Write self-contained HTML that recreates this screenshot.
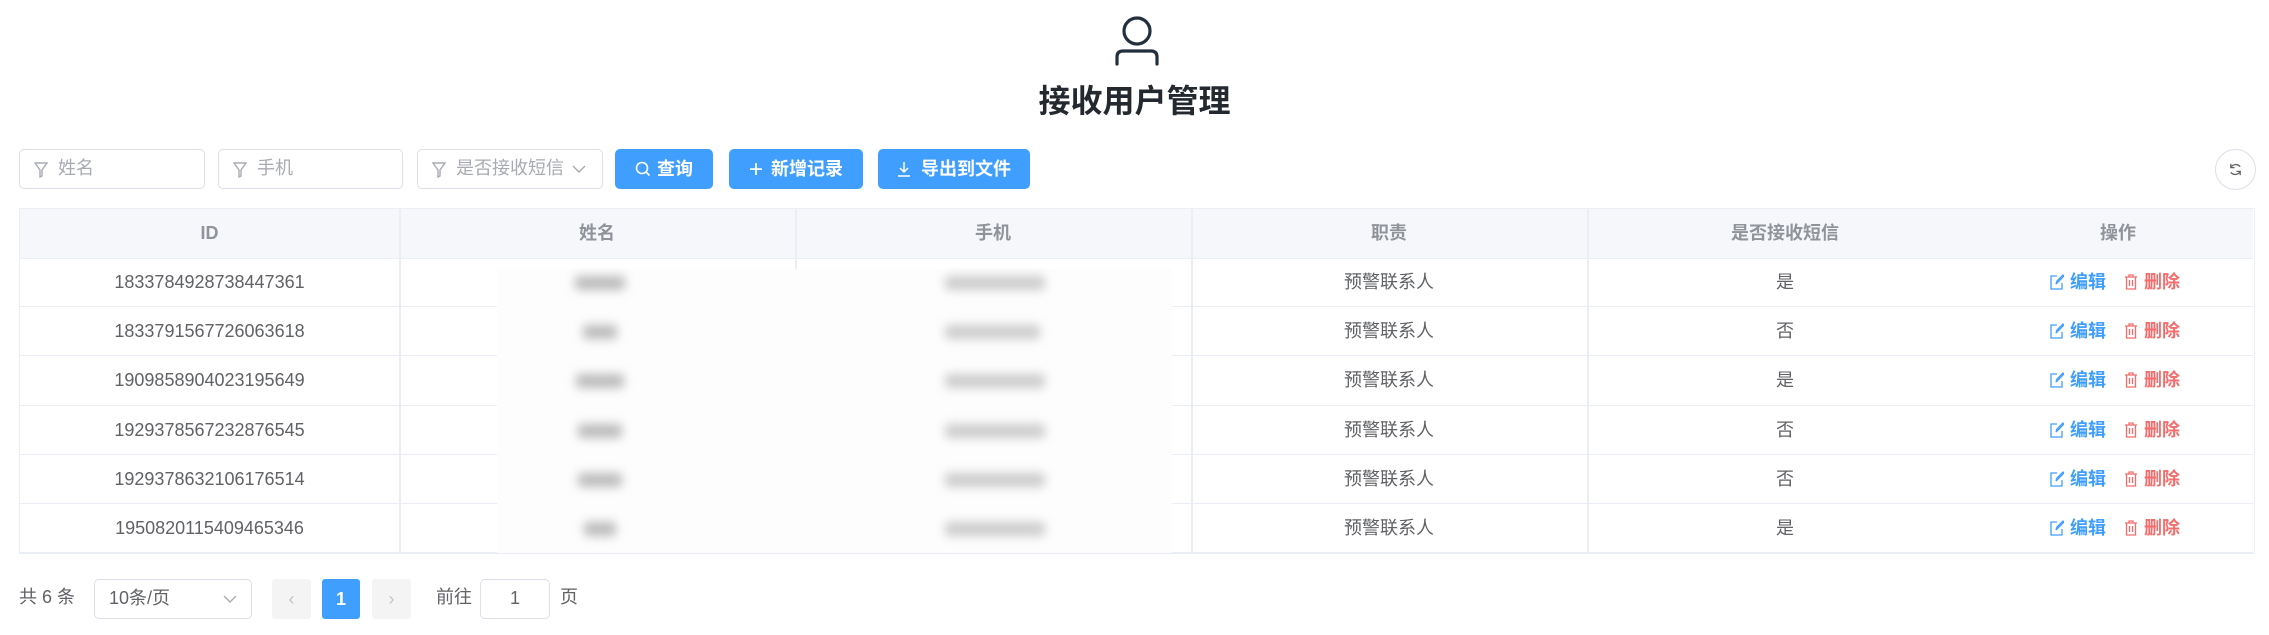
<!DOCTYPE html>
<html><head><meta charset="utf-8"><style>
*{margin:0;padding:0;box-sizing:border-box}
body{width:2269px;height:635px;background:#fff;font-family:"Liberation Sans","Noto Sans CJK SC",sans-serif;color:#606266;position:relative;overflow:hidden}
.a{position:absolute}
.inp{position:absolute;top:149px;height:40px;border:1.5px solid #dcdfe6;border-radius:5px;font-size:18px;color:#a8abb2;line-height:37px;padding-left:38px}
.inp svg{position:absolute;left:14px;top:12px}
.btn{position:absolute;top:149px;height:40px;background:#409eff;border-radius:5px;color:#fff;font-size:18px;font-weight:bold;line-height:40px;text-align:center}
.t{position:absolute;left:19px;top:208px;width:2236px;height:346px;border:1.5px solid #ebeef5}
.row{position:absolute;left:0;width:2233px;border-bottom:1.5px solid #ebeef5;font-size:18px;line-height:48px}
.c{position:absolute;top:0;text-align:center}
.hd{background:#f5f7fa;color:#909399;font-weight:bold}
.vl{position:absolute;top:0;width:1.5px;height:100%;background:#ebeef5}
.blob{position:absolute;background:#bbb;filter:blur(5px);height:14px;border-radius:4px}
</style></head><body>
<svg class="a" style="left:1114px;top:16px" width="46" height="50" viewBox="0 0 46 50" fill="none" stroke="#242f3e" stroke-width="3.2" stroke-linecap="round"><circle cx="23" cy="15" r="13"/><path d="M3 48 V41 Q3 35 9 35 H37 Q43 35 43 41 V48"/></svg>
<div class="a" style="left:0;width:2269px;top:80px;text-align:center;font-size:32px;font-weight:bold;color:#24292f;line-height:42px">接收用户管理</div>

<div class="inp" style="left:19px;width:186px"><svg width="14" height="16" viewBox="0 0 14 16" fill="none" stroke="#a8abb2" stroke-width="1.4"><path d="M1 1h12L8 8v6l-2 1V8z"/></svg>姓名</div>
<div class="inp" style="left:218px;width:185px"><svg width="14" height="16" viewBox="0 0 14 16" fill="none" stroke="#a8abb2" stroke-width="1.4"><path d="M1 1h12L8 8v6l-2 1V8z"/></svg>手机</div>
<div class="inp" style="left:417px;width:186px"><svg width="14" height="16" viewBox="0 0 14 16" fill="none" stroke="#a8abb2" stroke-width="1.4"><path d="M1 1h12L8 8v6l-2 1V8z"/></svg>是否接收短信<svg style="left:154px;top:15px" width="14" height="9" viewBox="0 0 14 9" fill="none" stroke="#a8abb2" stroke-width="1.4"><path d="M1 1l6 6 6-6"/></svg></div>
<div class="btn" style="left:615px;width:98px"><svg width="16" height="16" viewBox="0 0 16 16" fill="none" stroke="#fff" stroke-width="1.6" style="vertical-align:-2px;margin-right:6px"><circle cx="7" cy="7" r="5.5"/><path d="M11 11l3.5 3.5"/></svg>查询</div>
<div class="btn" style="left:729px;width:134px"><span style="font-weight:normal;font-size:24px;vertical-align:-2px;margin-right:8px">+</span>新增记录</div>
<div class="btn" style="left:878px;width:152px"><svg width="14" height="16" viewBox="0 0 14 16" fill="none" stroke="#fff" stroke-width="1.5" style="vertical-align:-2px;margin-right:10px"><path d="M7 1v10M3 7l4 4 4-4M1 15h12"/></svg>导出到文件</div>
<div class="a" style="left:2215px;top:149px;width:41px;height:41px;border:1.5px solid #dcdfe6;border-radius:50%"><svg style="position:absolute;left:12px;top:12px" width="15" height="15" viewBox="0 0 16 16" fill="none" stroke="#606266" stroke-width="1.4"><path d="M13 5A6 6 0 0 0 3 6M3 11a6 6 0 0 0 10-1M3 2v4h4M13 14v-4h-4"/></svg></div>

<div class="t">
 <div class="row hd" style="top:0;height:50px;line-height:48px">
  <div class="c" style="left:0;width:379px">ID</div><div class="c" style="left:379px;width:396px">姓名</div><div class="c" style="left:775px;width:396px">手机</div><div class="c" style="left:1171px;width:396px">职责</div><div class="c" style="left:1567px;width:396px">是否接收短信</div><div class="c" style="left:1963px;width:270px">操作</div>
 </div>
 <div class="vl" style="left:379px"></div><div class="vl" style="left:775px"></div><div class="vl" style="left:1171px"></div><div class="vl" style="left:1567px"></div>
</div>
<div id="rows"></div>
<div class="a" style="left:497px;top:269px;width:675px;height:284px;background:#fdfdfd"></div>
<script>
var d=[["1833784928738447361","是",50,100],["1833791567726063618","否",34,95],["1909858904023195649","是",48,100],["1929378567232876545","否",44,100],["1929378632106176514","否",44,100],["1950820115409465346","是",32,100]];
var h='';
d.forEach(function(r,i){var y=258+i*49.2;
h+='<div class="row" style="left:20px;top:'+(y)+'px;height:49.2px">'+
'<div class="c" style="left:0;width:379px">'+r[0]+'</div>'+
'<div class="c" style="left:1171px;width:396px">预警联系人</div>'+
'<div class="c" style="left:1567px;width:396px">'+r[1]+'</div>'+
'<div class="c" style="left:2030px;width:200px;text-align:left;font-weight:bold"><span style="color:#409eff"><svg width="14" height="16" viewBox="0 0 14 16" fill="none" stroke="#409eff" stroke-width="1.3" style="vertical-align:-2px;margin-right:6px"><path d="M7 2H1v13h11V9M6 10l1-3 6-6 1 1-6 6z"/></svg>编辑</span><span style="color:#f56c6c;margin-left:18px"><svg width="14" height="16" viewBox="0 0 14 16" fill="none" stroke="#f56c6c" stroke-width="1.3" style="vertical-align:-2px;margin-right:6px"><path d="M1 3h12M5 3V1h4v2M2.5 3v12h9V3M5.5 6v6M8.5 6v6"/></svg>删除</span></div></div>';
});
document.getElementById('rows').outerHTML=h+'<div id="b"></div>';
var b='';d.forEach(function(r,i){var y=258+i*49.2+18;b+='<div class="blob" style="left:'+(600-r[2]/2)+'px;top:'+y+'px;width:'+r[2]+'px;z-index:2"></div><div class="blob" style="left:945px;top:'+y+'px;width:'+r[3]+'px;z-index:2;background:#ccc"></div>';});
document.getElementById('b').outerHTML=b;
</script>
<style>.row .c{line-height:48px}</style>

<div class="a" style="left:19px;top:585px;font-size:18px;line-height:24px">共 6 条</div>
<div class="a" style="left:94px;top:579px;width:158px;height:40px;border:1.5px solid #dcdfe6;border-radius:5px;font-size:18px;line-height:37px;padding-left:14px">10条/页<svg style="position:absolute;right:14px;top:15px" width="14" height="9" viewBox="0 0 14 9" fill="none" stroke="#a8abb2" stroke-width="1.4"><path d="M1 1l6 6 6-6"/></svg></div>
<div class="a" style="left:272px;top:579px;width:39px;height:40px;background:#f4f4f5;border-radius:3px;color:#c0c4cc;text-align:center;line-height:40px;font-size:18px">‹</div>
<div class="a" style="left:322px;top:579px;width:38px;height:40px;background:#409eff;border-radius:3px;color:#fff;text-align:center;line-height:40px;font-size:18px;font-weight:bold">1</div>
<div class="a" style="left:372px;top:579px;width:39px;height:40px;background:#f4f4f5;border-radius:3px;color:#c0c4cc;text-align:center;line-height:40px;font-size:18px">›</div>
<div class="a" style="left:436px;top:585px;font-size:18px;line-height:24px">前往</div>
<div class="a" style="left:480px;top:579px;width:70px;height:40px;border:1.5px solid #dcdfe6;border-radius:5px;text-align:center;line-height:37px;font-size:18px">1</div>
<div class="a" style="left:560px;top:585px;font-size:18px;line-height:24px">页</div>
</body></html>
